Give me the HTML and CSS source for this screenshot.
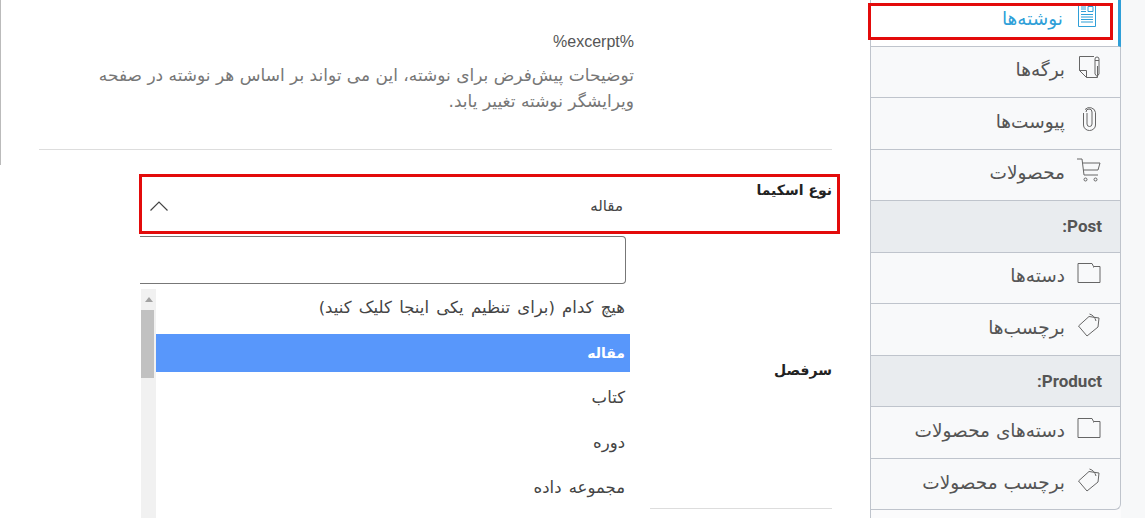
FILE: index.html
```html
<!DOCTYPE html>
<html lang="fa" dir="rtl">
<head>
    <meta charset="UTF-8">
    <title>نوع اسکیما</title>
    <link rel="stylesheet" href="styles.css">
</head>
<body>
    <div class="page">
        <aside class="side-wrap">
            <ul class="side-menu">
                <li class="side-item side-active">
                    <svg class="side-icon" viewBox="0 0 24 24" fill="none" stroke="#2f9fd8" stroke-width="1"><path d="M3.500 .5h17v23h-17z"/><path d="M13 3.500h5v5h-5zM6 4h5M6 6h5M6 8.500h5M6 11.500h12M6 14h12M6 16.500h12M6 19h12"/></svg>
                    <span>نوشته‌ها</span>
                </li>
                <li class="side-item">
                    <svg class="side-icon" viewBox="0 0 24 24" fill="none" stroke="#666" stroke-width="1"><path d="M17 1.500H2.500v14l7 7h11V11"/><path d="M2.500 15.500h7v7"/><path d="M18 19V4a2 2 0 0 1 4 0v15l-2 2.500zM18 5.500h4"/></svg>
                    <span>برگه‌ها</span>
                </li>
                <li class="side-item">
                    <svg class="side-icon" viewBox="0 0 24 24" fill="none" stroke="#666" stroke-width="1"><path d="M10 6v11a2.500 2.500 0 0 0 5 0V5a3 3 0 0 0-6 0M6.500 6v12a6 5.500 0 0 0 12 0V5.500a6 5.500 0 0 0-10.500-3"/></svg>
                    <span>پیوست‌ها</span>
                </li>
                <li class="side-item">
                    <svg class="side-icon" viewBox="0 0 24 24" fill="none" stroke="#666" stroke-width="1"><path d="M0 1h5l2 16h14M6 5h17l-2 7H6.500"/><circle cx="8.500" cy="21.500" r="1.500"/><circle cx="18.500" cy="21.500" r="1.500"/></svg>
                    <span>محصولات</span>
                </li>
                <li class="side-item side-head">Post:</li>
                <li class="side-item">
                    <svg class="side-icon" viewBox="0 0 24 24" fill="none" stroke="#666" stroke-width="1"><path d="M1 2.500h14l1.500 3h6.500v16H1z"/><path d="M16.500 5.500v1"/></svg>
                    <span>دسته‌ها</span>
                </li>
                <li class="side-item">
                    <svg class="side-icon" viewBox="0 0 24 24" fill="none" stroke="#666" stroke-width="1"><path d="M1.500 13 12 3.500l10 1.500-1 9L10 23z"/><path d="M19 8c-1-3.500-3-6-6.500-7"/></svg>
                    <span>برچسب‌ها</span>
                </li>
                <li class="side-item side-head">Product:</li>
                <li class="side-item">
                    <svg class="side-icon" viewBox="0 0 24 24" fill="none" stroke="#666" stroke-width="1"><path d="M1 2.500h14l1.500 3h6.500v16H1z"/><path d="M16.500 5.500v1"/></svg>
                    <span>دسته‌های محصولات</span>
                </li>
                <li class="side-item">
                    <svg class="side-icon" viewBox="0 0 24 24" fill="none" stroke="#666" stroke-width="1"><path d="M1.500 13 12 3.500l10 1.500-1 9L10 23z"/><path d="M19 8c-1-3.500-3-6-6.500-7"/></svg>
                    <span>برچسب محصولات</span>
                </li>
            </ul>
        </aside>

        <main class="content">
            <div class="desc-block">
                <p class="desc-code">%excerpt%</p>
                <p class="desc-text">توضیحات پیش‌فرض برای نوشته، این می تواند بر اساس هر نوشته در صفحه ویرایشگر نوشته تغییر یابد.</p>
            </div>

            <div class="form-row">
                <div class="form-labels">
                    <label class="form-label">نوع اسکیما</label>
                    <label class="form-label form-label-second">سرفصل</label>
                    <div class="form-line"></div>
                </div>
                <div class="select-box">
                    <div class="select-head">
                        <span>مقاله</span>
                        <svg class="select-arrow" viewBox="0 0 18 10" fill="none" stroke="#444" stroke-width="1.200"><path d="M.5 9.500 9 1l8.500 8.500"/></svg>
                    </div>
                    <input class="select-search" type="text">
                    <div class="select-list">
                        <ul class="select-options">
                            <li>هیچ کدام (برای تنظیم یکی اینجا کلیک کنید)</li>
                            <li class="option-active">مقاله</li>
                            <li>کتاب</li>
                            <li>دوره</li>
                            <li>مجموعه داده</li>
                        </ul>
                        <div class="scroll-bar">
                            <span class="scroll-up"></span>
                            <span class="scroll-thumb"></span>
                        </div>
                    </div>
                </div>
            </div>
        </main>
    </div>

    <div class="mark mark-menu"></div>
    <div class="mark mark-field"></div>
</body>
</html>
```

FILE: styles.css
```css
* {
    margin: 0;
    padding: 0;
    box-sizing: border-box;
}

html, body {
    height: 518px;
    overflow: hidden;
}

body {
    font-family: "DejaVu Sans", sans-serif;
    background: #fff;
    color: #444;
    position: relative;
}

.page {
    display: flex;
    height: 518px;
}

/* sidebar */
.side-wrap {
    width: 275px;
    padding-right: 24px;
    background: linear-gradient(270deg, #f7f8f9 0, #f7f8f9 24px, #fbfbfc 24px);
    flex: none;
    border-left: 1px solid #bfc4cc;
}

.side-menu {
    list-style: none;
    width: 250px;
    height: 510px;
    background: #f8f9fa;
    border-bottom: 1px solid #bfc4cc;
    border-bottom-right-radius: 6px;
    border-right: 1px solid #bfc4cc;
}

.side-item {
    display: flex;
    align-items: center;
    gap: 12px;
    height: 51.500px;
    padding-right: 19px;
    font-size: 18.500px;
    color: #555;
    border-bottom: 1px solid #bfc4cc;
}

.side-item span {
    margin-bottom: 4px;
}

.side-item:last-child {
    border-bottom: none;
}

.side-active {
    height: 46.500px;
    padding-bottom: 9px;
    background: #fff;
    color: #2f9fd8;
    border-right: 3px solid #2f9fd8;
    margin-right: -1px;
}

.side-active span {
    margin-bottom: 0;
}

.side-head {
    padding-right: 18px;
    background: #e9ecef;
    font-family: Roboto, sans-serif;
    font-weight: 700;
    font-size: 17px;
}

.side-icon {
    width: 24px;
    height: 24px;
    margin-bottom: 9px;
    flex: none;
}

.side-active .side-icon {
    margin-bottom: 6px;
}

/* main column */
.content {
    flex: 1;
    padding-right: 38px;
    padding-left: 39px;
    position: relative;
}

.content::after {
    content: "";
    position: absolute;
    left: 0;
    top: 0;
    width: 1px;
    height: 165px;
    background: #bbb;
}

.desc-block {
    height: 150px;
    padding-top: 31px;
    padding-right: 198px;
    border-bottom: 1px solid #ddd;
}

.desc-code {
    font-family: "Liberation Sans", sans-serif;
    font-size: 16px;
    line-height: 22px;
    color: #555;
    margin-bottom: 9px;
}

.desc-text {
    max-width: 545px;
    font-size: 17px;
    line-height: 26px;
    color: #777;
}

.form-row {
    display: flex;
}

.form-labels {
    width: 198px;
    flex: none;
    padding-top: 29px;
}

.form-label {
    display: block;
    font-size: 14px;
    font-weight: 700;
    line-height: 22px;
    color: #222;
}

.form-label-second {
    margin-top: 158px;
}

.form-line {
    margin-top: 127px;
    width: 182px;
    border-top: 1px solid #ddd;
}

.select-box {
    width: 490px;
    margin-top: 24px;
    margin-right: 4px;
}

.select-head {
    display: flex;
    justify-content: space-between;
    align-items: center;
    height: 60px;
    padding: 4px 7px 0 10px;
    font-size: 15px;
    color: #444;
}

.select-arrow {
    width: 18px;
    height: 10px;
}

.select-search {
    display: block;
    width: 486px;
    height: 48px;
    margin-top: 2px;
    margin-right: 4px;
    background: #fff;
    border: 1px solid #777;
    border-left: 0;
    border-radius: 0 4px 4px 0;
}

.select-list {
    display: flex;
    height: 240px;
    margin-top: 5px;
}

.select-options {
    list-style: none;
    flex: 1;
    display: flex;
    flex-direction: column;
    gap: 7px;
}

.select-options li {
    height: 38px;
    line-height: 38px;
    padding-right: 5px;
    font-size: 16.500px;
    word-spacing: 2px;
    color: #444;
    flex: none;
}

.select-options .option-active {
    background: #5897fb;
    color: #fff;
    font-size: 14px;
    font-weight: 700;
}

.scroll-bar {
    width: 15px;
    background: #f1f1f1;
    flex: none;
    margin-left: 1px;
}

.scroll-up {
    display: block;
    width: 0;
    height: 0;
    margin: 8px auto;
    border-left: 4px solid transparent;
    border-right: 4px solid transparent;
    border-bottom: 5px solid #a3a3a3;
}

.scroll-thumb {
    display: block;
    height: 68px;
    background: #c1c1c1;
    margin-right: 2px;
}

/* red annotation boxes */
.mark {
    position: absolute;
    border: 3px solid #e30b0b;
}

.mark-menu {
    left: 868px;
    top: 3px;
    width: 245px;
    height: 37px;
}

.mark-field {
    left: 139px;
    top: 174px;
    width: 701px;
    height: 60px;
}
```
